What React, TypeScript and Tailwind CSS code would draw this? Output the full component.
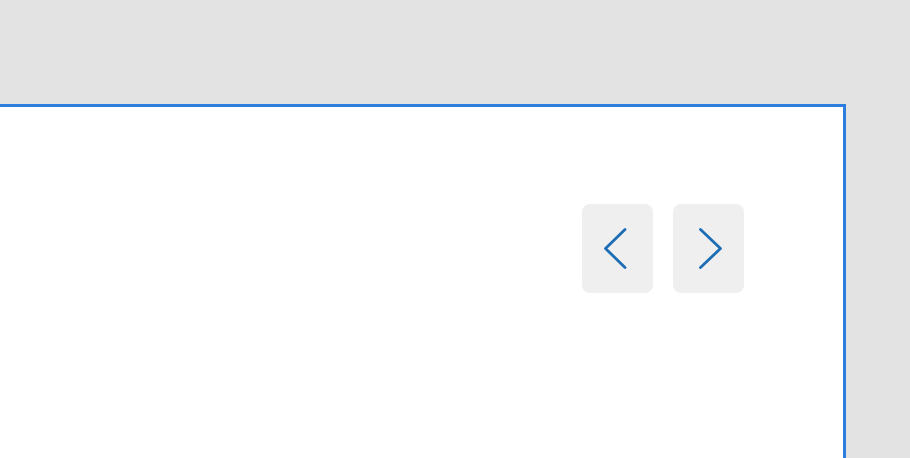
import React from "react";

export default function App() {
  return (
    <div className="w-[910px] h-[458px] bg-[#e3e3e3] overflow-hidden">
      <div className="mt-[104px] w-[846px] h-[400px] bg-white border-t-[3px] border-r-[3px] border-[#2e7ee0] flex justify-end pr-[99px] pt-[97px] gap-[20px]">
        <button className="w-[71px] h-[89px] rounded-[8px] bg-[#efeff0]">
          <svg width="71" height="89" viewBox="0 0 71 89" fill="none">
            <path d="M43 25.5 L23.5 44.5 L43 63.5" stroke="#1d6db5" strokeWidth="2.8" strokeLinecap="round" strokeLinejoin="round" />
          </svg>
        </button>
        <button className="w-[71px] h-[89px] rounded-[8px] bg-[#efeff0]">
          <svg width="71" height="89" viewBox="0 0 71 89" fill="none">
            <path d="M27.5 25.5 L47.5 44.5 L27.5 63.5" stroke="#1d6db5" strokeWidth="2.8" strokeLinecap="round" strokeLinejoin="round" />
          </svg>
        </button>
      </div>
    </div>
  );
}
